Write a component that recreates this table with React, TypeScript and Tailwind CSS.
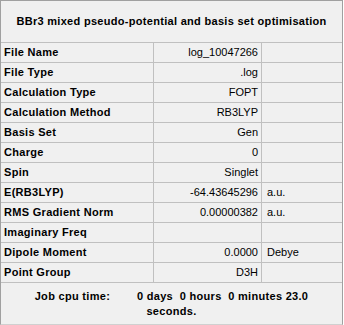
import React from "react";

const rows: [string, string, string][] = [
  ["File Name", "log_10047266", ""],
  ["File Type", ".log", ""],
  ["Calculation Type", "FOPT", ""],
  ["Calculation Method", "RB3LYP", ""],
  ["Basis Set", "Gen", ""],
  ["Charge", "0", ""],
  ["Spin", "Singlet", ""],
  ["E(RB3LYP)", "-64.43645296", "a.u."],
  ["RMS Gradient Norm", "0.00000382", "a.u."],
  ["Imaginary Freq", "", ""],
  ["Dipole Moment", "0.0000", "Debye"],
  ["Point Group", "D3H", ""],
];

export default function App() {
  return (
    <div
      className="w-[344px] h-[325px] bg-white text-black text-[11px]"
      style={{ fontFamily: '"Liberation Sans", Arial, sans-serif' }}
    >
      <div className="w-[343px] h-[325px] flex flex-col bg-[#f0f0f0] border border-[#a0a0a0] border-b-[#d0d0d0]">
        {/* title */}
        <div className="h-[41px] flex items-center justify-center font-bold tracking-[0.3px]">
          BBr3 mixed pseudo-potential and basis set optimisation
        </div>

        {/* property rows */}
        {rows.map(([label, value, unit]) => (
          <div key={label} className="h-[20px] flex border-t border-[#c0c0c0]">
            <div className="w-[153px] border-r border-[#c0c0c0] pl-[3px] flex items-center font-bold tracking-[0.3px]">
              {label}
            </div>
            <div className="w-[108px] border-r border-[#c0c0c0] pr-[3px] flex items-center justify-end">
              {value}
            </div>
            <div className="flex-1 pl-[5px] flex items-center">{unit}</div>
          </div>
        ))}

        {/* footer */}
        <div className="flex-1 border-t border-[#c0c0c0] pt-[6px] text-center font-bold tracking-[0.3px] leading-[15px] whitespace-pre">
          {"Job cpu time:        0 days  0 hours  0 minutes 23.0"}
          <br />
          {"seconds."}
        </div>
      </div>
    </div>
  );
}
